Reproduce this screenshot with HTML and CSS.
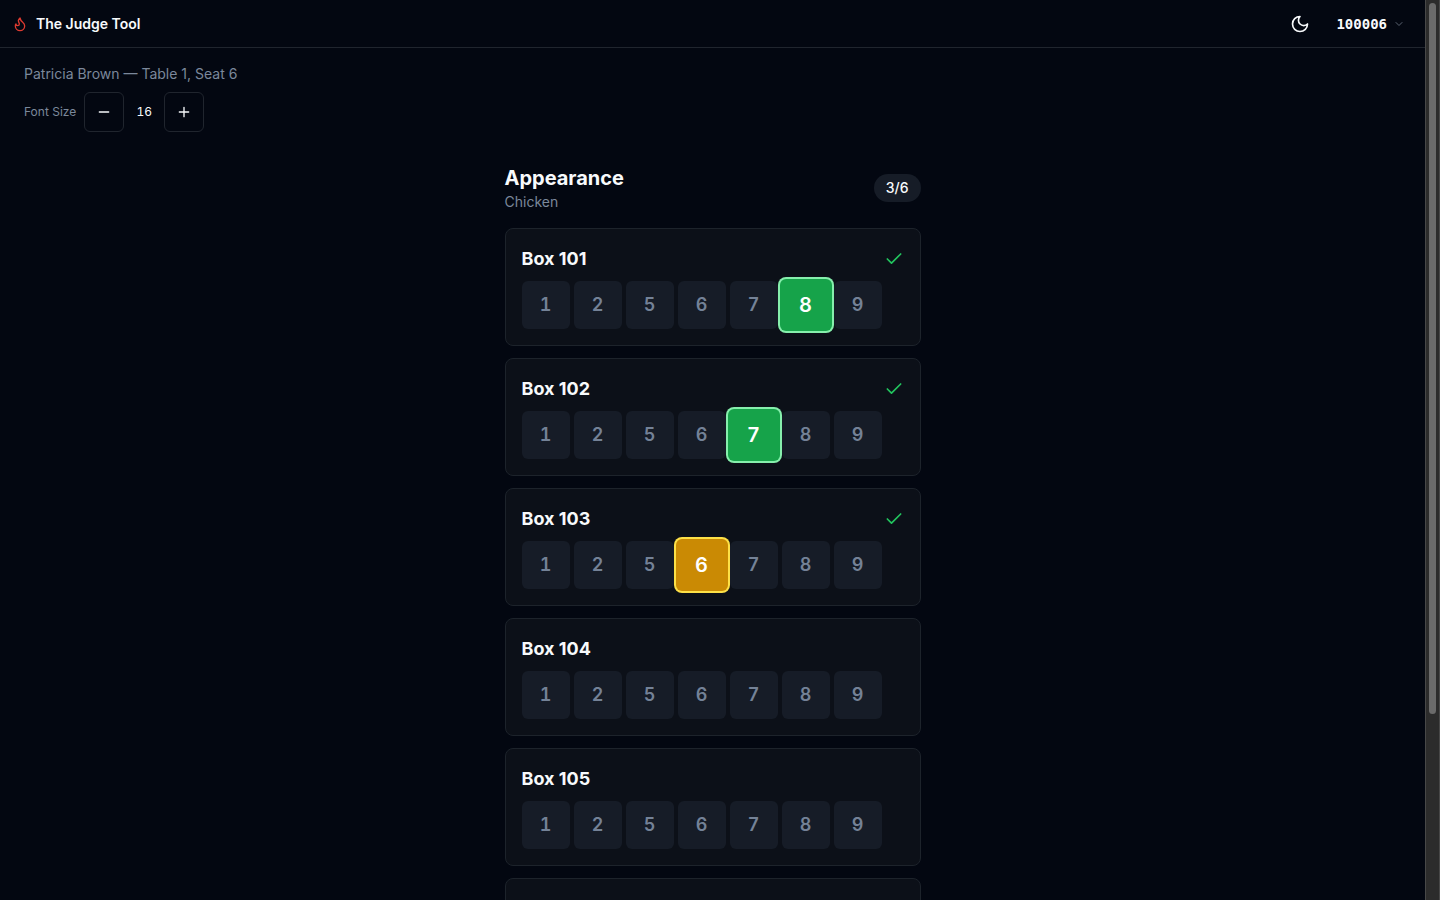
FILE: index.html
```html
<!DOCTYPE html>
<html lang="en">
<head>
  <meta charset="UTF-8">
  <meta name="viewport" content="width=device-width, initial-scale=1.0">
  <title>The Judge Tool</title>
  <link rel="stylesheet" href="styles.css">
</head>
<body>
  <div class="page" id="page">
    <header class="topbar">
      <a class="brand" href="#">
        <svg class="icon brand-icon" viewBox="0 0 24 24"><path d="M8.5 14.5A2.5 2.5 0 0 0 11 12c0-1.38-.5-2-1-3-1.072-2.143-.224-4.054 2-6 .5 2.5 2 4.9 4 6.5 2 1.6 3 3.5 3 5.5a7 7 0 1 1-14 0c0-1.153.433-2.294 1-3a2.5 2.5 0 0 0 2.5 2.5z"/></svg>
        <span>The Judge Tool</span>
      </a>
      <div class="topbar-actions">
        <button class="theme-btn" type="button" aria-label="Toggle theme">
          <svg class="icon icon-moon" viewBox="0 0 24 24"><path d="M12 3a6 6 0 0 0 9 9 9 9 0 1 1-9-9Z"/></svg>
        </button>
        <button class="user-btn" type="button">
          <span>100006</span>
          <svg class="icon icon-chevron" viewBox="0 0 24 24"><path d="m6 9 6 6 6-6"/></svg>
        </button>
      </div>
    </header>

    <div class="judge-info">
      <p class="judge-name">Patricia Brown — Table 1, Seat 6</p>
      <div class="font-size">
        <span class="font-size-label">Font Size</span>
        <button class="step-btn" id="fontDown" type="button" aria-label="Decrease font size">
          <svg class="icon" viewBox="0 0 24 24"><path d="M5 12h14"/></svg>
        </button>
        <span class="font-size-value" id="fontValue">16</span>
        <button class="step-btn" id="fontUp" type="button" aria-label="Increase font size">
          <svg class="icon" viewBox="0 0 24 24"><path d="M5 12h14M12 5v14"/></svg>
        </button>
      </div>
    </div>

    <main class="scorecard">
      <div class="section-head">
        <div>
          <h1>Appearance</h1>
          <p class="category">Chicken</p>
        </div>
        <span class="progress" id="progress">3/6</span>
      </div>
      <div class="boxes" id="boxes"></div>
    </main>
  </div>

  <div class="scrollbar" id="scrollbar" aria-hidden="true">
    <div class="scrollbar-thumb" id="thumb"></div>
  </div>

  <script src="script.js"></script>
</body>
</html>
```

FILE: styles.css
```css
* {
  box-sizing: border-box;
}

body {
  display: flex;
  height: 100vh;
  margin: 0;
  background-color: #030711;
  color: #f8fafc;
  font-family: Inter, sans-serif;
  font-size: 14px;
  line-height: 20px;
}

h1, h2, p {
  margin: 0;
}

button {
  padding: 0;
  border: none;
  background: none;
  color: inherit;
  font: inherit;
  cursor: pointer;
}

/* scrolling area with its own scrollbar */
.page {
  flex: 1;
  min-width: 0;
  overflow-y: auto;
  scrollbar-width: none;
}

.scrollbar {
  width: 15px;
  padding: 3px;
  border-left: 1px solid #484848;
  border-right: 1px solid #484848;
  background-color: #2c2c2c;
}

.scrollbar-thumb {
  border-radius: 4px;
  background-color: #6b6b6b;
}

.icon {
  display: block;
  width: 16px;
  height: 16px;
  fill: none;
  stroke: currentColor;
  stroke-width: 2;
  stroke-linecap: round;
  stroke-linejoin: round;
}

/* top bar */
.topbar {
  display: flex;
  align-items: center;
  justify-content: space-between;
  height: 48px;
  padding: 0 12px;
  border-bottom: 1px solid #20252e;
}

.brand {
  display: flex;
  align-items: center;
  gap: 8px;
  color: inherit;
  font-weight: 600;
  text-decoration: none;
}

.brand-icon {
  color: #dc3a30;
}

.topbar-actions {
  display: flex;
  align-items: center;
  gap: 8px;
}

.theme-btn {
  display: flex;
  align-items: center;
  justify-content: center;
  width: 40px;
  height: 40px;
}

.icon-moon {
  width: 20px;
  height: 20px;
}

.user-btn {
  display: flex;
  align-items: center;
  gap: 6px;
  padding: 0 8px;
  font-family: "DejaVu Sans Mono", monospace;
  font-weight: 700;
}

.icon-chevron {
  width: 12px;
  height: 12px;
  color: #5b6472;
}

/* judge info */
.judge-info {
  display: flex;
  flex-direction: column;
  gap: 8px;
  padding: 16px 24px;
  color: #7b889b;
}

.font-size {
  display: flex;
  align-items: center;
  gap: 8px;
  font-size: 12px;
}

.step-btn {
  display: flex;
  align-items: center;
  justify-content: center;
  width: 40px;
  height: 40px;
  border: 1px solid #20252e;
  border-radius: 6px;
  color: #f8fafc;
}

.font-size-value {
  width: 24px;
  color: #f8fafc;
  font-variant-numeric: tabular-nums;
  text-align: center;
}

/* scorecard */
.scorecard {
  max-width: 448px;
  margin: 0 auto;
  padding: 16px 16px 136px;
}

.section-head {
  display: flex;
  align-items: center;
  justify-content: space-between;
  margin-bottom: 16px;
}

h1 {
  font-size: 20px;
  font-weight: 700;
  line-height: 28px;
}

.category {
  color: #7b889b;
}

.progress {
  padding: 4px 12px;
  border-radius: 14px;
  background-color: #161c27;
  font-weight: 500;
}

.boxes {
  display: flex;
  flex-direction: column;
  gap: 12px;
}

.box {
  padding: 16px;
  border: 1px solid #1d232b;
  border-radius: 8px;
  background-color: #0c1018;
}

.box-head {
  display: flex;
  align-items: center;
  justify-content: space-between;
  margin-bottom: 8px;
}

.box h2 {
  font-size: 18px;
  font-weight: 700;
  line-height: 28px;
}

.check {
  width: 20px;
  height: 20px;
  color: #22c55e;
}

.scores {
  display: flex;
  gap: 4px;
}

.score {
  width: 48px;
  height: 48px;
  border-radius: 6px;
  background-color: #161c27;
  color: #748297;
  font-size: 18px;
  font-weight: 600;
  font-variant-numeric: tabular-nums;
}

/* picked score grows over its neighbours */
.score.good,
.score.fair {
  z-index: 1;
  width: 52px;
  height: 52px;
  margin: -2px;
  color: #ffffff;
  font-size: 20px;
}

.score.good {
  background-color: #16a34a;
  box-shadow: 0 0 0 2px #86efac;
}

.score.fair {
  background-color: #ca8a04;
  box-shadow: 0 0 0 2px #fde047;
}
```

FILE: script.js
```javascript
const scores = [1, 2, 5, 6, 7, 8, 9];
const boxes = [
  { number: 101, score: 8 },
  { number: 102, score: 7 },
  { number: 103, score: 6 },
  { number: 104, score: null },
  { number: 105, score: null },
  { number: 106, score: null }
];

const check = '<svg class="icon check" viewBox="0 0 24 24"><path d="M20 6 9 17l-5-5"/></svg>';

function renderBoxes() {
  document.getElementById('boxes').innerHTML = boxes.map((box, i) => `
    <section class="box">
      <div class="box-head">
        <h2>Box ${box.number}</h2>
        ${box.score ? check : ''}
      </div>
      <div class="scores">
        ${scores.map(s => {
          const picked = s === box.score ? (s >= 7 ? 'good' : 'fair') : '';
          return `<button class="score ${picked}" type="button" onclick="setScore(${i}, ${s})">${s}</button>`;
        }).join('')}
      </div>
    </section>
  `).join('');

  const done = boxes.filter(box => box.score).length;
  document.getElementById('progress').textContent = `${done}/${boxes.length}`;
}

function setScore(index, score) {
  boxes[index].score = score;
  renderBoxes();
}

function changeFontSize(step) {
  const value = document.getElementById('fontValue');
  value.textContent = Number(value.textContent) + step;
}

// Keep the thumb in step with the scrolling area
function updateThumb() {
  const page = document.getElementById('page');
  const thumb = document.getElementById('thumb');
  const track = document.getElementById('scrollbar').clientHeight - 6;
  const ratio = track / page.scrollHeight;
  thumb.style.height = `${Math.round(page.clientHeight * ratio)}px`;
  thumb.style.transform = `translateY(${Math.round(page.scrollTop * ratio)}px)`;
}

document.getElementById('fontDown').addEventListener('click', () => changeFontSize(-1));
document.getElementById('fontUp').addEventListener('click', () => changeFontSize(1));
document.getElementById('page').addEventListener('scroll', updateThumb);
window.addEventListener('resize', updateThumb);

renderBoxes();
updateThumb();
```
